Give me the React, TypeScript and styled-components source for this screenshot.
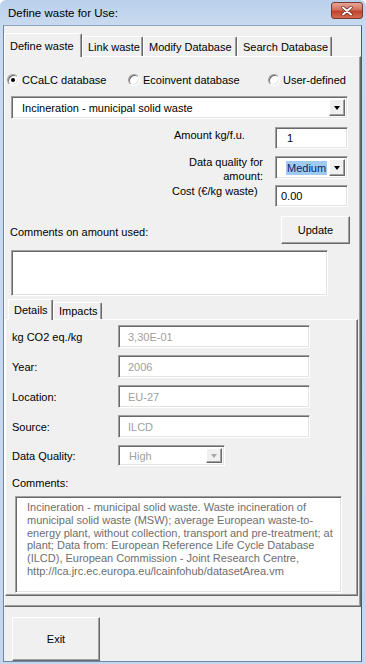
import styled, { createGlobalStyle, css } from 'styled-components'

const GlobalStyle = createGlobalStyle`
  html, body { margin: 0; padding: 0; background: #fff; }
  body {
    font-family: "Liberation Sans", Arial, sans-serif;
    font-size: 11px;
    color: #000;
  }
  * { box-sizing: border-box; }
`

const sunken = css`
  border: 1px solid;
  border-color: #a0a0a0 #fff #fff #a0a0a0;
  box-shadow: inset 1px 1px #696969, inset -1px -1px #e3e3e3;
`

const raised = css`
  border: 1px solid;
  border-color: #fff #696969 #696969 #fff;
  box-shadow: inset -1px -1px #a0a0a0;
`

const Window = styled.div`
  width: 366px;
  height: 664px;
  display: flex;
  flex-direction: column;
  padding: 0 4px 2px 3px;
  background: linear-gradient(#b9d0ec, #c8daef 25px, #c4d7ee);
  border-radius: 6px 6px 0 0;
  overflow: hidden;
`

const TitleBar = styled.div`
  height: 25px;
  flex-shrink: 0;
  display: flex;
  align-items: center;
  padding-left: 5px;
  margin-right: -4px;
  font-size: 11.5px;
`

const CloseButton = styled.div`
  margin-left: auto;
  margin-right: 3px;
  margin-top: -4px;
  width: 32px;
  height: 17px;
  border: 1px solid #7a3a32;
  border-radius: 3px;
  background: linear-gradient(#e6a598, #d2705c 45%, #c0432c 55%, #d26a50);
  display: flex;
  align-items: center;
  justify-content: center;
`

const Client = styled.div`
  flex: 1;
  background: #f0f0f0;
  border: 1px solid;
  border-color: #8ba2c0 #3e5e88 #6d86a8 #6d86a8;
  overflow: hidden;
`

const TabStrip = styled.div<{ $top: number; $h: number; $pad?: number }>`
  display: flex;
  align-items: flex-end;
  margin-top: ${p => p.$top}px;
  height: ${p => p.$h}px;
  padding-left: ${p => p.$pad ?? 0}px;
  position: relative;
  z-index: 1;
  flex-shrink: 0;
`

const Tab = styled.div<{ $active?: boolean; $w: number; $h: number }>`
  width: ${p => p.$w}px;
  height: ${p => p.$h}px;
  display: flex;
  align-items: center;
  padding-left: 5px;
  background: #f0f0f0;
  border-left: 1px solid #fff;
  border-top: 1px solid #fff;
  border-right: 1px solid #696969;
  box-shadow: inset -1px 0 #a0a0a0;
  border-radius: 2px 2px 0 0;
  white-space: nowrap;
  ${p => p.$active && css`
    margin-bottom: -1px;
  `}
`

const Panel = styled.div<{ $h: number; $w?: number }>`
  height: ${p => p.$h}px;
  ${p => p.$w && css`width: ${p.$w}px;`}
  display: flex;
  flex-direction: column;
  flex-shrink: 0;
  border: 1px solid;
  border-color: #fff #696969 #696969 #fff;
  box-shadow: inset -1px -1px #a0a0a0;
`

const RadioRow = styled.div`
  margin-top: 16px;
  height: 14px;
  padding-left: 2px;
  display: grid;
  grid-template-columns: 121px 140px auto;
  align-items: center;
`

const RadioItem = styled.label`
  display: flex;
  align-items: center;
  gap: 3px;
  white-space: nowrap;
`

const RadioDot = styled.span<{ $checked?: boolean }>`
  width: 12px;
  height: 12px;
  border-radius: 50%;
  background: #fff;
  ${sunken};
  display: flex;
  align-items: center;
  justify-content: center;
  &::after {
    content: '';
    width: 4px;
    height: 4px;
    border-radius: 50%;
    background: ${p => (p.$checked ? '#000' : 'transparent')};
  }
`

const Combo = styled.div<{ $w: number; $h: number; $left?: number; $top?: number; $disabled?: boolean }>`
  width: ${p => p.$w}px;
  height: ${p => p.$h}px;
  margin-left: ${p => p.$left ?? 0}px;
  margin-top: ${p => p.$top ?? 0}px;
  background: #fff;
  ${sunken};
  display: flex;
  align-items: center;
  padding: 2px;
  color: ${p => (p.$disabled ? '#a0a0a0' : '#000')};
  flex-shrink: 0;
`

const ComboText = styled.div`
  flex: 1;
  padding-left: 8px;
  white-space: nowrap;
`

const Selected = styled.span`
  background: #9fcbf2;
  color: #0d1f5c;
  padding: 1px 1px;
`

const DropButton = styled.div<{ $disabled?: boolean; $h: number }>`
  width: 16px;
  height: ${p => p.$h}px;
  background: #f0f0f0;
  ${raised};
  display: flex;
  align-items: center;
  justify-content: center;
  &::after {
    content: '';
    border-left: 3.5px solid transparent;
    border-right: 3.5px solid transparent;
    border-top: 4px solid ${p => (p.$disabled ? '#a8a8a8' : '#000')};
    margin-top: 1px;
  }
`

const FieldRow = styled.div<{ $top: number; $h: number }>`
  display: flex;
  justify-content: flex-end;
  align-items: flex-start;
  padding-right: 12px;
  margin-top: ${p => p.$top}px;
  height: ${p => p.$h}px;
  flex-shrink: 0;
`

const FieldLabel = styled.div<{ $align?: 'left' | 'right'; $indent?: number; $offset?: number }>`
  width: 91px;
  margin-right: 12px;
  line-height: 14px;
  text-align: ${p => p.$align ?? 'left'};
  padding-left: ${p => p.$indent ?? 0}px;
  margin-top: ${p => p.$offset ?? 0}px;
`

const TextBox = styled.div<{ $w: number; $h: number; $indent?: number; $muted?: boolean }>`
  width: ${p => p.$w}px;
  height: ${p => p.$h}px;
  background: #fff;
  ${sunken};
  display: flex;
  align-items: center;
  padding-left: ${p => p.$indent ?? 5}px;
  color: ${p => (p.$muted ? '#a0a0a0' : '#000')};
  flex-shrink: 0;
`

const UpdateRow = styled.div`
  margin-top: 9px;
  display: flex;
  justify-content: space-between;
  align-items: flex-end;
  padding: 0 10px 0 5px;
  flex-shrink: 0;
`

const PlainLabel = styled.div<{ $bottom?: number }>`
  line-height: 14px;
  margin-bottom: ${p => p.$bottom ?? 0}px;
`

const Button = styled.div<{ $w: number; $h: number }>`
  width: ${p => p.$w}px;
  height: ${p => p.$h}px;
  background: #f0f0f0;
  ${raised};
  display: flex;
  align-items: center;
  justify-content: center;
`

const TextArea = styled.div<{ $w: number; $h: number; $left: number; $top: number }>`
  width: ${p => p.$w}px;
  height: ${p => p.$h}px;
  margin-left: ${p => p.$left}px;
  margin-top: ${p => p.$top}px;
  background: #fff;
  ${sunken};
  padding: 4px 6px 0 11px;
  color: #6e6e6e;
  line-height: 12.8px;
  flex-shrink: 0;
`

const DetailList = styled.div`
  display: flex;
  flex-direction: column;
  gap: 7px;
  padding: 5px 0 0 6px;
`

const DetailRow = styled.div`
  display: flex;
  align-items: center;
`

const DetailLabel = styled.div`
  width: 106px;
`

const SectionLabel = styled.div`
  margin: 10px 0 0 6px;
  line-height: 14px;
`

const ExitRow = styled.div`
  margin: 10px 0 0 8px;
`

const details = [
  { label: 'kg CO2 eq./kg', value: '3,30E-01' },
  { label: 'Year:', value: '2006' },
  { label: 'Location:', value: 'EU-27' },
  { label: 'Source:', value: 'ILCD' },
]

export default function App() {
  return (
    <>
      <GlobalStyle />
      <Window>
        <TitleBar>
          Define waste for Use:
          <CloseButton>
            <svg width="12" height="10" viewBox="0 0 12 10">
              <path d="M2 1.5 L10 8.5 M10 1.5 L2 8.5" stroke="#5a1d14" strokeWidth="3.2" strokeLinecap="round" />
              <path d="M2 1.5 L10 8.5 M10 1.5 L2 8.5" stroke="#fff" strokeWidth="2" strokeLinecap="round" />
            </svg>
          </CloseButton>
        </TitleBar>
        <Client>
          <TabStrip $top={7} $h={23}>
            <Tab $active $w={78} $h={24}>Define waste</Tab>
            <Tab $w={61} $h={20}>Link waste</Tab>
            <Tab $w={94} $h={20}>Modify Database</Tab>
            <Tab $w={95} $h={20}>Search Database</Tab>
          </TabStrip>
          <Panel $h={551}>
            <RadioRow>
              <RadioItem><RadioDot $checked />CCaLC database</RadioItem>
              <RadioItem><RadioDot />Ecoinvent database</RadioItem>
              <RadioItem><RadioDot />User-defined</RadioItem>
            </RadioRow>
            <Combo $w={337} $h={23} $left={6} $top={9}>
              <ComboText>Incineration - municipal solid waste</ComboText>
              <DropButton $h={17} />
            </Combo>
            <FieldRow $top={8} $h={22}>
              <FieldLabel $indent={2} $offset={1}>Amount kg/f.u.</FieldLabel>
              <TextBox $w={73} $h={22} $indent={11}>1</TextBox>
            </FieldRow>
            <FieldRow $top={7} $h={23}>
              <FieldLabel $align="right" $offset={-1}>Data quality for amount:</FieldLabel>
              <Combo $w={73} $h={23}>
                <ComboText><Selected>Medium</Selected></ComboText>
                <DropButton $h={17} />
              </Combo>
            </FieldRow>
            <FieldRow $top={6} $h={22}>
              <FieldLabel $offset={-1}>Cost (€/kg waste)</FieldLabel>
              <TextBox $w={73} $h={22}>0.00</TextBox>
            </FieldRow>
            <UpdateRow>
              <PlainLabel $bottom={5}>Comments on amount used:</PlainLabel>
              <Button $w={69} $h={28}>Update</Button>
            </UpdateRow>
            <TextArea $w={317} $h={46} $left={6} $top={6} />
            <TabStrip $top={3} $h={20} $pad={3}>
              <Tab $active $w={45} $h={21}>Details</Tab>
              <Tab $w={49} $h={17}>Impacts</Tab>
            </TabStrip>
            <Panel $h={277} $w={353}>
              <DetailList>
                {details.map(d => (
                  <DetailRow key={d.label}>
                    <DetailLabel>{d.label}</DetailLabel>
                    <TextBox $w={192} $h={23} $indent={9} $muted>{d.value}</TextBox>
                  </DetailRow>
                ))}
                <DetailRow>
                  <DetailLabel>Data Quality:</DetailLabel>
                  <Combo $w={107} $h={21} $disabled>
                    <ComboText>High</ComboText>
                    <DropButton $h={15} $disabled />
                  </Combo>
                </DetailRow>
              </DetailList>
              <SectionLabel>Comments:</SectionLabel>
              <TextArea $w={327} $h={97} $left={9} $top={6}>
                Incineration - municipal solid waste. Waste incineration of municipal solid waste (MSW); average European waste-to-energy plant, without collection, transport and pre-treatment; at plant; Data from: European Reference Life Cycle Database (ILCD), European Commission - Joint Research Centre, http://lca.jrc.ec.europa.eu/lcainfohub/datasetArea.vm
              </TextArea>
            </Panel>
          </Panel>
          <ExitRow>
            <Button $w={88} $h={44}>Exit</Button>
          </ExitRow>
        </Client>
      </Window>
    </>
  )
}
